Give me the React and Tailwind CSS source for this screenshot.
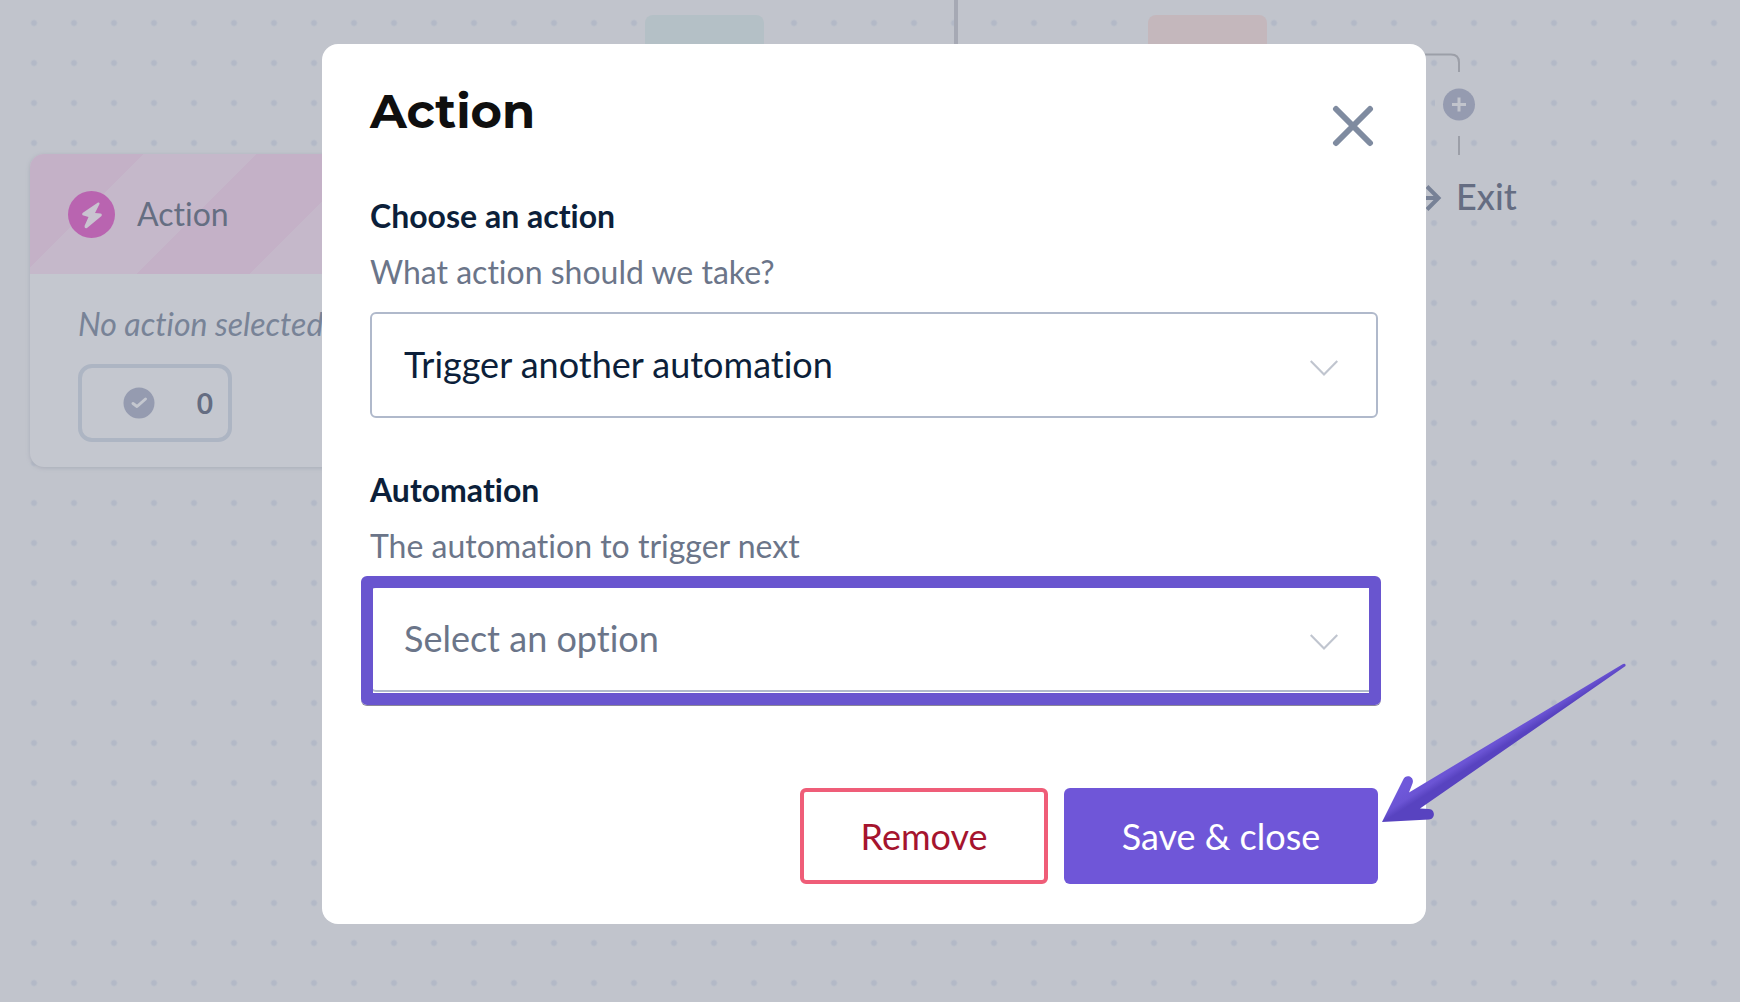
import React, { useState } from 'react';

const ACTIONS = ['Trigger another automation', 'Send an email', 'Add a tag'];
const AUTOMATIONS = ['Welcome series', 'Win-back campaign'];

// --- Canvas ---

const ActionNode = () => (
  <div className="absolute left-[30px] top-[154px] w-[480px] overflow-hidden rounded-[14px] bg-[#c4c7cf] shadow-[0_1px_4px_#a9adb8]">
    <div className="flex h-[120px] items-center gap-[22px] bg-[repeating-linear-gradient(135deg,#c4b1c7_0px,#c4b1c7_80px,#c5b8ca_80px,#c5b8ca_160px)] pl-[38px]">
      <svg width="47" height="47" viewBox="0 0 47 47" aria-hidden="true">
        <circle cx="23.500" cy="23.500" r="23.500" fill="#b964b0" />
        <path
          d="M30 11.500 L14.500 22 Q13.500 24 15.500 24.500 L20.500 26 L16.500 35 Q16.500 38 19 37 L33.500 25 Q34.500 23 32.500 22.500 L27 22 L31.500 13 Q32 11 30 11.500 Z"
          fill="#c9c3d0"
        />
      </svg>
      <span className="text-[32px] leading-[48px] text-[#656e82]">Action</span>
    </div>
    <div className="px-12 pb-[25px] pt-[26px]">
      <p className="text-[32px] italic leading-[48px] text-[#788397]">No action selected</p>
      <div className="mt-4 flex h-[78px] w-[154px] items-center justify-between rounded-[14px] border-4 border-[#adb5c3] pl-[41px] pr-[15px]">
        <svg width="32" height="32" viewBox="0 0 32 32" aria-hidden="true">
          <circle cx="16" cy="16" r="15.500" fill="#959bb0" />
          <path d="M10 16.500 L14 19.500 L22.500 12" fill="none" stroke="#c4c7cf" strokeWidth="3" strokeLinecap="round" strokeLinejoin="round" />
        </svg>
        <span className="text-[28px] font-bold leading-[40px] text-[#656d82]">0</span>
      </div>
    </div>
  </div>
);

const ExitBranch = () => (
  <>
    <svg className="absolute left-[1400px] top-[40px]" width="100" height="120" viewBox="0 0 100 120" fill="none" aria-hidden="true">
      <path d="M0 14.500 H51 Q59 14.500 59 22.500 V32" stroke="#9c9fa8" strokeWidth="2" />
      <rect x="35" y="48" width="48" height="32" fill="#c1c4cc" />
      <circle cx="59" cy="64.500" r="16" fill="#959bb0" />
      <path d="M59 57.500 V71.500 M52 64.500 H66" stroke="#c1c4cc" strokeWidth="3" />
      <path d="M59 96 V115" stroke="#9c9fa8" strokeWidth="2" />
    </svg>
    <div className="absolute left-[1410px] top-[172px] flex items-center gap-[14px] bg-[#c1c4cc] pr-3">
      <svg width="32" height="32" viewBox="0 0 32 32" fill="none" stroke="#778196" strokeWidth="4" aria-hidden="true">
        <path d="M2 18 H28 M17 6.500 L28.500 18 L17 29.500" />
      </svg>
      <span className="text-[36px] font-medium leading-[48px] text-[#656d82]">Exit</span>
    </div>
  </>
);

const Canvas = () => (
  <div className="absolute inset-0 bg-[radial-gradient(circle_at_20px_20px,#b3b9c7_2px,transparent_4px)] bg-[length:40px_40px] bg-[position:14px_3px]">
    <div className="absolute left-[645px] top-[15px] h-[60px] w-[119px] rounded-lg bg-[#b4c0c6]" />
    <div className="absolute left-[1148px] top-[15px] h-[60px] w-[119px] rounded-lg bg-[#c4b7bc]" />
    <div className="absolute left-[954px] top-0 h-[60px] w-1 bg-[#a6a9b4]" />
    <ActionNode />
    <ExitBranch />
  </div>
);

// --- Modal ---

const SelectField = ({ id, label, hint, value, onChange, placeholder, options, highlighted }) => (
  <div className="flex flex-col">
    <label htmlFor={id} className="text-[32px] font-bold leading-[48px] text-[#0c1f3a]">
      {label}
    </label>
    <p id={`${id}-hint`} className="mt-2 text-[32px] leading-[48px] text-[#6b7589]">
      {hint}
    </p>
    <div className="relative mt-4">
      <select
        id={id}
        aria-describedby={`${id}-hint`}
        value={value}
        onChange={(e) => onChange(e.target.value)}
        className={`h-[106px] w-full appearance-none rounded-md border-2 border-[#b0b9cb] bg-white pb-0.5 pl-8 pr-20 text-[36px] outline-none ${
          value ? 'text-[#0c1f3a]' : 'text-[#6b7589]'
        }`}
      >
        {placeholder && <option value="">{placeholder}</option>}
        {options.map((option) => (
          <option key={option} value={option}>{option}</option>
        ))}
      </select>
      <svg className="pointer-events-none absolute right-10 top-12" width="28" height="17" viewBox="0 0 28 17" fill="none" aria-hidden="true">
        <path d="M0.700 1 L14 14.500 L27.300 1" stroke="#c0c5cf" strokeWidth="2.200" />
      </svg>
      {highlighted && (
        <div className="pointer-events-none absolute -bottom-[13px] -left-[9px] -right-[3px] -top-[10px] rounded-md border-[12px] border-[#6955cf] shadow-[0_1px_0_#8b8799]" />
      )}
    </div>
  </div>
);

const PointerArrow = () => (
  <svg className="pointer-events-none absolute -right-[204px] bottom-[96px]" width="250" height="168" viewBox="0 0 250 168" aria-hidden="true">
    <defs>
      <linearGradient id="arrowFill" gradientUnits="userSpaceOnUse" x1="115" y1="70" x2="127" y2="89">
        <stop offset="0" stopColor="#6f58da" />
        <stop offset="0.500" stopColor="#6b54d4" />
        <stop offset="0.800" stopColor="#5843c0" />
      </linearGradient>
    </defs>
    <path
      d="M2 162 L23 120 C26 113 35 117 32.500 123.500 L29 132.500 L243 4 Q246 3 245.500 6 L40 148.500 L49 149 C55.500 149.500 55.500 159 49 159.500 Z"
      fill="url(#arrowFill)"
    />
  </svg>
);

const App = () => {
  const [open, setOpen] = useState(true);
  const [action, setAction] = useState(ACTIONS[0]);
  const [automation, setAutomation] = useState('');

  const close = () => setOpen(false);

  return (
    <div className="relative min-h-screen overflow-hidden bg-[#c1c4cc] font-['Lato',sans-serif] [font-variant-ligatures:none]">
      <Canvas />

      {open && (
        <div className="relative flex justify-center pb-10 pl-2 pt-11">
          <div role="dialog" aria-labelledby="modal-title" className="relative w-full max-w-[1104px] rounded-2xl bg-white px-12 pb-10 pt-10">
            <div className="flex h-[108px] items-start justify-between">
              <h1 id="modal-title" className="font-['Montserrat','Inter',sans-serif] text-[48px] font-bold leading-[54px] text-[#0f0f0f]">
                Action
              </h1>
              <button type="button" aria-label="Close" onClick={close} className="mr-1 mt-[21px]">
                <svg width="42" height="42" viewBox="0 0 42 42" fill="none" aria-hidden="true">
                  <path d="M4 4 L38 38 M38 4 L4 38" stroke="#7f8ba0" strokeWidth="6" strokeLinecap="round" />
                </svg>
              </button>
            </div>

            <div className="flex flex-col gap-12">
              <SelectField
                id="action"
                label="Choose an action"
                hint="What action should we take?"
                value={action}
                onChange={setAction}
                options={ACTIONS}
              />
              <SelectField
                id="automation"
                label="Automation"
                hint="The automation to trigger next"
                value={automation}
                onChange={setAutomation}
                placeholder="Select an option"
                options={AUTOMATIONS}
                highlighted
              />
            </div>

            <div className="mt-24 flex justify-end gap-4 text-[36px] leading-[48px]">
              <button type="button" onClick={close} className="h-24 w-[248px] rounded-md border-4 border-[#ef5d78] bg-white text-[#a5142e]">
                Remove
              </button>
              <button type="button" onClick={close} className="h-24 w-[314px] rounded-md bg-[#6f56d8] text-white">
                Save &amp; close
              </button>
            </div>

            <PointerArrow />
          </div>
        </div>
      )}
    </div>
  );
};

export default App;
